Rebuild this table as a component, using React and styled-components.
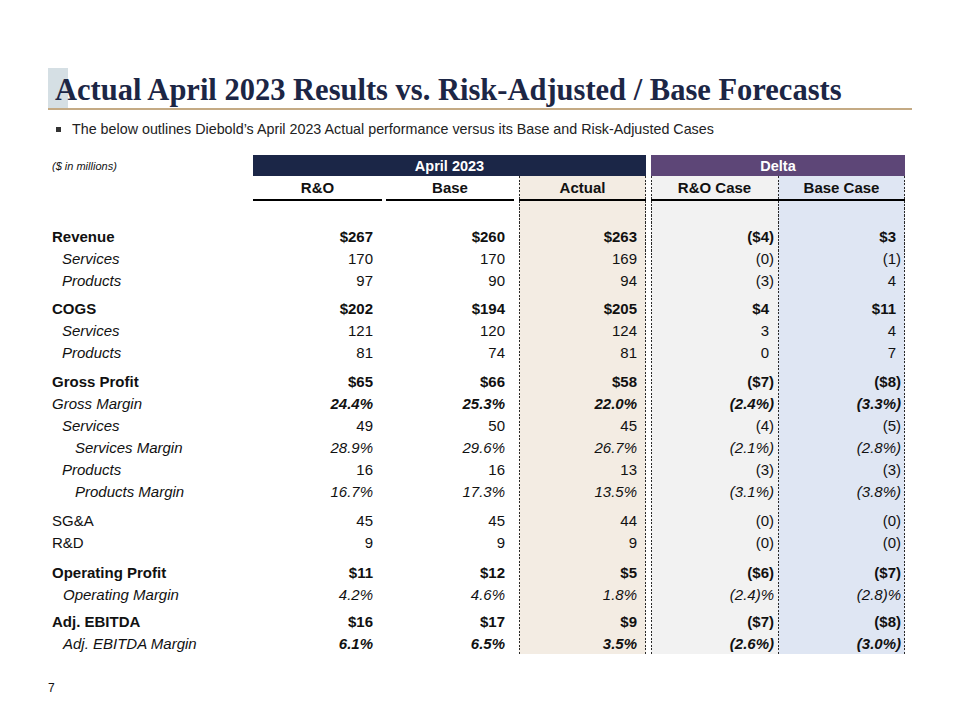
import React from 'react';
import styled, { createGlobalStyle } from 'styled-components';

const colors = {
  ink: '#1c2645',
  navy: '#1b2647',
  purple: '#5d4677',
  gold: '#c4aa84',
  chip: '#d5dfe4',
  text: '#111111',
  dash: '#2a2a2a',
  actual: '#f3ece3',
  roCase: '#f2f2f2',
  baseCase: '#dfe6f3',
};

const GlobalStyle = createGlobalStyle`
  html, body {
    margin: 0;
    padding: 0;
    background: #ffffff;
  }
  body {
    font-family: 'Liberation Sans', Arial, sans-serif;
    color: ${colors.text};
  }
`;

// thin dashed rule drawn as a background layer so it runs unbroken down a column
const dashLayer = (side) =>
  `repeating-linear-gradient(to bottom, ${colors.dash} 0 2px, transparent 2px 3.5px) ${side} top / 1px 100% no-repeat`;

const Page = styled.div`
  width: 960px;
  height: 720px;
  box-sizing: border-box;
  padding: 68px 48px 25px 48px;
  display: flex;
  flex-direction: column;
`;

const Title = styled.h1`
  margin: 0;
  height: 42px;
  box-sizing: border-box;
  display: flex;
  align-items: flex-end;
  padding: 0 0 3px 7px;
  border-bottom: 2px solid ${colors.gold};
  background: linear-gradient(${colors.chip}, ${colors.chip}) no-repeat 0 0 / 20px 100%;
  background-clip: padding-box;
  font-family: 'Liberation Serif', 'Times New Roman', serif;
  font-weight: 700;
  font-size: 30.5px;
  line-height: 1;
  color: ${colors.ink};
  white-space: nowrap;
`;

const Bullets = styled.ul`
  margin: 11px 0 0;
  padding: 0 0 0 8px;
  list-style: none;
`;

const Bullet = styled.li`
  display: flex;
  align-items: center;
  gap: 11px;
  font-size: 14.3px;
  line-height: 16px;
  color: #222222;

  &::before {
    content: '';
    flex: none;
    width: 5px;
    height: 5px;
    background: #333333;
  }
`;

const Table = styled.div`
  margin-top: 18px;
  display: flex;
  flex-direction: column;
`;

const BandRow = styled.div`
  display: flex;
  height: 21px;
`;

const Note = styled.div`
  width: 205px;
  flex: none;
  box-sizing: border-box;
  padding-left: 4px;
  display: flex;
  align-items: center;
  font-size: 11px;
  font-style: italic;
`;

const Band = styled.div`
  width: ${(p) => p.$w}px;
  margin-left: ${(p) => p.$ml || 0}px;
  flex: none;
  display: flex;
  align-items: center;
  justify-content: center;
  background: ${(p) => p.$bg};
  color: #ffffff;
  font-weight: 700;
  font-size: 14.5px;
`;

const Columns = styled.div`
  display: flex;
`;

const LabelColumn = styled.div`
  width: 205px;
  flex: none;
  display: flex;
  flex-direction: column;
`;

const Column = styled.div`
  width: ${(p) => p.$w}px;
  margin-left: ${(p) => p.$ml || 0}px;
  flex: none;
  display: flex;
  flex-direction: column;
  background: ${(p) =>
    [p.$dashL && dashLayer('left'), p.$dashR && dashLayer('right'), p.$tone || 'transparent']
      .filter(Boolean)
      .join(', ')};
`;

const ColHead = styled.div`
  height: 25px;
  box-sizing: border-box;
  display: flex;
  align-items: center;
  justify-content: center;
  border-bottom: 2px solid #000000;
  font-weight: 700;
  font-size: 15px;
`;

const HeadBlank = styled.div`
  height: 25px;
`;

const Spacer = styled.div`
  height: ${(p) => p.$h}px;
  flex: none;
`;

const LabelCell = styled.div`
  height: 22px;
  flex: none;
  box-sizing: border-box;
  padding-left: ${(p) => p.$indent}px;
  display: flex;
  align-items: center;
  font-size: 15px;
  font-weight: ${(p) => (p.$bold ? 700 : 400)};
  font-style: ${(p) => (p.$italic ? 'italic' : 'normal')};
  white-space: nowrap;
`;

const ValueCell = styled.div`
  height: 22px;
  flex: none;
  box-sizing: border-box;
  padding-right: 4px;
  display: flex;
  align-items: center;
  justify-content: flex-end;
  font-size: 15px;
  font-weight: ${(p) => (p.$bold ? 700 : 400)};
  font-style: ${(p) => (p.$italic ? 'italic' : 'normal')};
  white-space: nowrap;
`;

const ParenPad = styled.span`
  visibility: hidden;
`;

const kinds = {
  total: { indent: 4, labelBold: true, labelItalic: false, bold: true, italic: false },
  sub: { indent: 14, labelBold: false, labelItalic: true, bold: false, italic: false },
  line: { indent: 4, labelBold: false, labelItalic: false, bold: false, italic: false },
  keyMargin: { indent: 4, labelBold: false, labelItalic: true, bold: true, italic: true },
  subMargin: { indent: 27, labelBold: false, labelItalic: true, bold: false, italic: true },
  margin: { indent: 15, labelBold: false, labelItalic: true, bold: false, italic: true },
  boldMargin: { indent: 15, labelBold: false, labelItalic: true, bold: true, italic: true },
};

const columns = [
  { title: 'R&O', w: 129 },
  { title: 'Base', w: 128, ml: 4 },
  { title: 'Actual', w: 127, ml: 5, tone: colors.actual, dashL: true, dashR: true },
  { title: 'R&O Case', w: 127, ml: 5, tone: colors.roCase, dashL: true },
  { title: 'Base Case', w: 127, tone: colors.baseCase, dashL: true, dashR: true },
];

const rows = [
  { label: 'Revenue', kind: 'total', v: ['$267', '$260', '$263', '($4)', '$3'] },
  { label: 'Services', kind: 'sub', v: ['170', '170', '169', '(0)', '(1)'] },
  { label: 'Products', kind: 'sub', v: ['97', '90', '94', '(3)', '4'] },
  { gap: 6 },
  { label: 'COGS', kind: 'total', v: ['$202', '$194', '$205', '$4', '$11'] },
  { label: 'Services', kind: 'sub', v: ['121', '120', '124', '3', '4'] },
  { label: 'Products', kind: 'sub', v: ['81', '74', '81', '0', '7'] },
  { gap: 7 },
  { label: 'Gross Profit', kind: 'total', v: ['$65', '$66', '$58', '($7)', '($8)'] },
  { label: 'Gross Margin', kind: 'keyMargin', v: ['24.4%', '25.3%', '22.0%', '(2.4%)', '(3.3%)'] },
  { label: 'Services', kind: 'sub', v: ['49', '50', '45', '(4)', '(5)'] },
  { label: 'Services Margin', kind: 'subMargin', v: ['28.9%', '29.6%', '26.7%', '(2.1%)', '(2.8%)'] },
  { label: 'Products', kind: 'sub', v: ['16', '16', '13', '(3)', '(3)'] },
  { label: 'Products Margin', kind: 'subMargin', v: ['16.7%', '17.3%', '13.5%', '(3.1%)', '(3.8%)'] },
  { gap: 7 },
  { label: 'SG&A', kind: 'line', v: ['45', '45', '44', '(0)', '(0)'] },
  { label: 'R&D', kind: 'line', v: ['9', '9', '9', '(0)', '(0)'] },
  { gap: 8 },
  { label: 'Operating Profit', kind: 'total', v: ['$11', '$12', '$5', '($6)', '($7)'] },
  { label: 'Operating Margin', kind: 'margin', v: ['4.2%', '4.6%', '1.8%', '(2.4)%', '(2.8)%'] },
  { gap: 5 },
  { label: 'Adj. EBITDA', kind: 'total', v: ['$16', '$17', '$9', '($7)', '($8)'] },
  { label: 'Adj. EBITDA Margin', kind: 'boldMargin', v: ['6.1%', '6.5%', '3.5%', '(2.6%)', '(3.0%)'] },
];

const Footer = styled.div`
  margin-top: auto;
  font-size: 12px;
  line-height: 14px;
  color: #111111;
`;

const Value = ({ text, kind }) => {
  const k = kinds[kind];
  const negative = text.startsWith('(');
  return (
    <ValueCell $bold={k.bold} $italic={k.italic}>
      {text}
      {!negative && <ParenPad>)</ParenPad>}
    </ValueCell>
  );
};

export default function App() {
  return (
    <>
      <GlobalStyle />
      <Page>
        <Title>Actual April 2023 Results vs. Risk-Adjusted / Base Forecasts</Title>
        <Bullets>
          <Bullet>
            The below outlines Diebold’s April 2023 Actual performance versus its Base and
            Risk-Adjusted Cases
          </Bullet>
        </Bullets>

        <Table>
          <BandRow>
            <Note>($ in millions)</Note>
            <Band $w={393} $bg={colors.navy}>April 2023</Band>
            <Band $w={254} $ml={5} $bg={colors.purple}>Delta</Band>
          </BandRow>

          <Columns>
            <LabelColumn>
              <HeadBlank />
              <Spacer $h={24} />
              {rows.map((r, i) =>
                r.gap ? (
                  <Spacer key={i} $h={r.gap} />
                ) : (
                  <LabelCell
                    key={i}
                    $indent={kinds[r.kind].indent}
                    $bold={kinds[r.kind].labelBold}
                    $italic={kinds[r.kind].labelItalic}
                  >
                    {r.label}
                  </LabelCell>
                )
              )}
            </LabelColumn>

            {columns.map((col, c) => (
              <Column
                key={col.title}
                $w={col.w}
                $ml={col.ml}
                $tone={col.tone}
                $dashL={col.dashL}
                $dashR={col.dashR}
              >
                <ColHead>{col.title}</ColHead>
                <Spacer $h={24} />
                {rows.map((r, i) =>
                  r.gap ? (
                    <Spacer key={i} $h={r.gap} />
                  ) : (
                    <Value key={i} text={r.v[c]} kind={r.kind} />
                  )
                )}
              </Column>
            ))}
          </Columns>
        </Table>

        <Footer>7</Footer>
      </Page>
    </>
  );
}
